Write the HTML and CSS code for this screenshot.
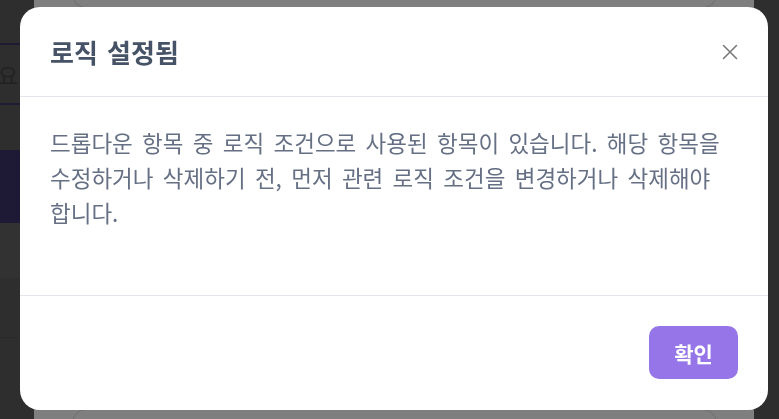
FILE: index.html
```html
<!DOCTYPE html>
<html lang="ko">
<head>
<meta charset="utf-8">
<title>로직 설정됨</title>
<link rel="stylesheet" href="styles.css">
</head>
<body>
<div class="page">
  <aside class="sidebar">
    <div class="side-field">입력하세요</div>
    <div class="side-gap"></div>
    <div class="side-active"></div>
    <div class="side-item"></div>
    <div class="side-item2"></div>
  </aside>
  <main class="main">
    <div class="card card-top"></div>
    <div class="main-spacer"></div>
    <div class="card card-bottom"></div>
  </main>
</div>

<div class="overlay">
  <div class="modal" role="dialog" aria-labelledby="modal-title">
    <header class="modal-header">
      <h2 class="modal-title" id="modal-title">로직 설정됨</h2>
      <button class="close-btn" aria-label="닫기">
        <svg width="16" height="16" viewBox="0 0 16 16" fill="none" stroke="currentColor" stroke-width="1.6" stroke-linecap="round">
          <path d="M1.5 1.5L14.5 14.5M14.5 1.5L1.5 14.5"/>
        </svg>
      </button>
    </header>
    <div class="modal-body">
      <p class="modal-text">드롭다운 항목 중 로직 조건으로 사용된 항목이 있습니다. 해당 항목을 수정하거나 삭제하기 전, 먼저 관련 로직 조건을 변경하거나 삭제해야 합니다.</p>
    </div>
    <footer class="modal-footer">
      <button class="confirm-btn">확인</button>
    </footer>
  </div>
</div>
</body>
</html>
```

FILE: styles.css
```css
* { box-sizing: border-box; }

html, body {
  margin: 0;
  padding: 0;
  height: 100%;
}

body {
  font-family: "Noto Sans CJK KR", "Noto Sans", sans-serif;
  background: #5c5c5c;
  overflow: hidden;
}

.page {
  display: flex;
  height: 419px;
}

.sidebar {
  width: 34px;
  flex: none;
  display: flex;
  flex-direction: column;
  background: #5c5c5c;
  overflow: hidden;
  padding-top: 43px;
}

.side-field {
  height: 62px;
  border-top: 2px solid #3e3566;
  border-bottom: 2px solid #3e3566;
  color: #444;
  font-size: 22px;
  line-height: 58px;
  white-space: nowrap;
  direction: rtl;
  text-align: left;
  padding-right: 16px;
}

.side-gap { height: 45px; }

.side-active {
  height: 73px;
  background: #3c356b;
}

.side-item {
  height: 55px;
  background: #646464;
}

.side-item2 {
  height: 60px;
  border-bottom: 1px solid #555;
}

.main {
  width: 720px;
  flex: none;
  background: #ffffff;
  display: flex;
  flex-direction: column;
  padding: 0 37px 0 38px;
}

.card {
  border: 1px solid #dedede;
  border-radius: 14px;
}

.card-top {
  height: 20px;
  margin-top: -12px;
  border-top: none;
  border-top-left-radius: 0;
  border-top-right-radius: 0;
}

.main-spacer { flex: 1; }

.card-bottom {
  height: 30px;
  margin-bottom: -20px;
}

.overlay {
  position: fixed;
  inset: 0;
  background: rgba(0, 0, 0, 0.5);
  display: flex;
  align-items: flex-start;
  padding: 7px 0 0 20px;
}

.modal {
  width: 748px;
  height: 403px;
  background: #ffffff;
  border-radius: 20px;
  display: flex;
  flex-direction: column;
  overflow: hidden;
}

.modal-header {
  height: 90px;
  flex: none;
  display: flex;
  align-items: center;
  justify-content: space-between;
  padding: 0 30px;
  border-bottom: 1px solid #e4e4ec;
}

.modal-title {
  margin: 0;
  font-size: 26px;
  font-weight: 700;
  color: #465266;
  line-height: 1;
  word-spacing: 2px;
}

.close-btn {
  border: none;
  background: none;
  padding: 0;
  width: 16px;
  height: 16px;
  color: #7a7a7a;
  display: flex;
  cursor: pointer;
}

.modal-body {
  height: 199px;
  flex: none;
  padding: 28px 30px 0;
  border-bottom: 1px solid #e4e4ec;
}

.modal-text {
  margin: 0;
  font-size: 22.5px;
  line-height: 35px;
  word-spacing: 3px;
  word-break: keep-all;
  color: #667085;
}

.modal-footer {
  flex: 1;
  display: flex;
  justify-content: flex-end;
  align-items: flex-start;
  padding: 30px 30px 0;
}

.confirm-btn {
  width: 89px;
  height: 53px;
  border: none;
  border-radius: 10px;
  background: #9575e8;
  color: #ffffff;
  font-family: inherit;
  font-size: 21px;
  font-weight: 700;
  cursor: pointer;
}
```
